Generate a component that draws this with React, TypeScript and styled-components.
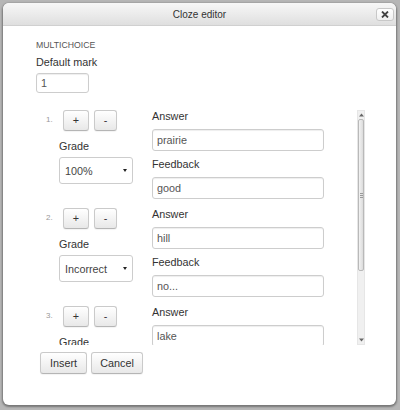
import React from "react";
import styled, { createGlobalStyle } from "styled-components";

const GlobalStyle = createGlobalStyle`
  html, body { margin: 0; padding: 0; }
  body {
    background: #b6b6b6;
    font-family: "Liberation Sans", Arial, sans-serif;
    font-size: 10.8px;
    color: #333;
  }
`;

const Backdrop = styled.div`
  width: 400px;
  height: 410px;
  padding: 3px 4px 5px 3px;
  box-sizing: border-box;
`;

const Dialog = styled.div`
  width: 393px;
  height: 402px;
  background: #fff;
  border-radius: 6px;
  box-shadow: 0 1px 2px 1px rgba(0, 0, 0, 0.35);
  overflow: hidden;
  display: flex;
  flex-direction: column;
`;

const Header = styled.div`
  height: 22px;
  flex: none;
  display: grid;
  grid-template-columns: 1fr auto 1fr;
  align-items: center;
  background: linear-gradient(#f7f7f7, #dfdfdf);
  border-bottom: 1px solid #d0d0d0;
`;

const Title = styled.div`
  grid-column: 2;
  font-size: 10px;
  color: #333;
`;

const CloseButton = styled.button`
  grid-column: 3;
  justify-self: end;
  margin-right: 2px;
  width: 18px;
  height: 13px;
  padding: 0;
  border: 1px solid #c8c8c8;
  border-radius: 3px;
  background: linear-gradient(#ffffff, #f0f0f0);
  display: flex;
  align-items: center;
  justify-content: center;
`;

const Body = styled.div`
  flex: 1;
  padding: 13px 0 0 33px;
  display: flex;
  flex-direction: column;
  align-items: flex-start;
`;

const SectionTitle = styled.div`
  font-size: 8.7px;
  line-height: 12px;
  color: #555;
  text-transform: uppercase;
`;

const Label = styled.div<{ $mt?: number }>`
  font-size: 10.8px;
  line-height: 13px;
  color: #333;
  margin-top: ${(p) => p.$mt ?? 0}px;
`;

const TextInput = styled.div<{ $w?: number; $h?: number; $mt?: number }>`
  box-sizing: border-box;
  width: ${(p) => (p.$w ? `${p.$w}px` : "100%")};
  height: ${(p) => p.$h ?? 22}px;
  margin-top: ${(p) => p.$mt ?? 0}px;
  border: 1px solid #cdcdcd;
  border-radius: 3px;
  box-shadow: inset 0 1px 1px rgba(0, 0, 0, 0.07);
  padding: 0 4px;
  display: flex;
  align-items: center;
  color: #555;
  font-size: 10.8px;
  background: #fff;
`;

const ScrollArea = styled.div`
  margin-top: 17px;
  height: 235px;
  width: 329px;
  display: flex;
  overflow: hidden;
`;

const ScrollContent = styled.div`
  flex: 1;
  padding-left: 10px;
  overflow: hidden;
  display: flex;
  flex-direction: column;
  gap: 9px;
`;

const Item = styled.div`
  display: grid;
  grid-template-columns: 13px 74px 191px;
  flex: none;
`;

const Num = styled.div`
  font-size: 8px;
  color: #999;
  padding-top: 5px;
`;

const LeftCol = styled.div`
  display: flex;
  flex-direction: column;
  align-items: flex-start;
`;

const ButtonRow = styled.div`
  display: flex;
  gap: 5px;
  margin-left: 4px;
`;

const Btn = styled.button<{ $w: number; $h?: number }>`
  box-sizing: border-box;
  width: ${(p) => p.$w}px;
  height: ${(p) => p.$h ?? 21}px;
  padding: 0;
  font-family: "Liberation Sans", Arial, sans-serif;
  font-size: 10.8px;
  line-height: 1;
  color: #333;
  background: linear-gradient(#ffffff, #e8e8e8);
  border: 1px solid #cacaca;
  border-bottom-color: #b5b5b5;
  border-radius: 3px;
  box-shadow: 0 1px 1px rgba(0, 0, 0, 0.05);
`;

const Select = styled.div`
  box-sizing: border-box;
  width: 74px;
  height: 27px;
  margin-top: 4px;
  border: 1px solid #cdcdcd;
  border-radius: 3px;
  padding: 0 4px 0 5px;
  display: flex;
  align-items: center;
  justify-content: space-between;
  color: #444;
  font-size: 10.8px;
`;

const Caret = styled.span`
  width: 0;
  height: 0;
  border-left: 2px solid transparent;
  border-right: 2px solid transparent;
  border-top: 3px solid #222;
  margin-right: 1px;
`;

const RightCol = styled.div`
  display: flex;
  flex-direction: column;
  margin-left: 19px;
`;

const Scrollbar = styled.div`
  width: 8px;
  flex: none;
  display: flex;
  flex-direction: column;
  background: #f0f0f0;
  border: 1px solid #e6e6e6;
  box-sizing: border-box;
`;

const ArrowBox = styled.div`
  height: 8px;
  flex: none;
  display: flex;
  align-items: center;
  justify-content: center;
`;

const Track = styled.div`
  flex: 1;
  display: flex;
  flex-direction: column;
`;

const Thumb = styled.div`
  height: 150px;
  border: 1px solid #b9b9b9;
  border-radius: 2px;
  background: linear-gradient(90deg, #f2f2f2, #dcdcdc);
  display: flex;
  align-items: center;
  justify-content: center;
`;

const Grip = styled.div`
  width: 3px;
  height: 5px;
  background: repeating-linear-gradient(#999 0 1px, transparent 1px 2px);
`;

const Footer = styled.div`
  display: flex;
  gap: 4px;
  margin: 7px 0 0 4px;
`;

const Arrow = ({ up }: { up?: boolean }) => (
  <svg width="5" height="4" viewBox="0 0 5 4">
    <path d={up ? "M0 3.5 L2.5 0.5 L5 3.5 Z" : "M0 0.5 L2.5 3.5 L5 0.5 Z"} fill="#666" />
  </svg>
);

type Entry = { n: number; grade: string; answer: string; feedback?: string };

const entries: Entry[] = [
  { n: 1, grade: "100%", answer: "prairie", feedback: "good" },
  { n: 2, grade: "Incorrect", answer: "hill", feedback: "no..." },
  { n: 3, grade: "Incorrect", answer: "lake", feedback: "" },
];

export default function App() {
  return (
    <>
      <GlobalStyle />
      <Backdrop>
        <Dialog>
          <Header>
            <Title>Cloze editor</Title>
            <CloseButton aria-label="close">
              <svg width="8" height="7" viewBox="0 0 8 7">
                <path d="M1 0.5 L7 6.5 M7 0.5 L1 6.5" stroke="#444" strokeWidth="1.8" />
              </svg>
            </CloseButton>
          </Header>
          <Body>
            <SectionTitle>Multichoice</SectionTitle>
            <Label $mt={5}>Default mark</Label>
            <TextInput $w={53} $h={20} $mt={4}>1</TextInput>
            <ScrollArea>
              <ScrollContent>
                {entries.map((e) => (
                  <Item key={e.n}>
                    <Num>{e.n}.</Num>
                    <LeftCol>
                      <ButtonRow>
                        <Btn $w={26}>+</Btn>
                        <Btn $w={23}>-</Btn>
                      </ButtonRow>
                      <Label $mt={9}>Grade</Label>
                      <Select>
                        <span>{e.grade}</span>
                        <Caret />
                      </Select>
                    </LeftCol>
                    <RightCol>
                      <Label>Answer</Label>
                      <TextInput $mt={6}>{e.answer}</TextInput>
                      <Label $mt={7}>Feedback</Label>
                      <TextInput $mt={6}>{e.feedback}</TextInput>
                    </RightCol>
                  </Item>
                ))}
              </ScrollContent>
              <Scrollbar>
                <ArrowBox>
                  <Arrow up />
                </ArrowBox>
                <Track>
                  <Thumb>
                    <Grip />
                  </Thumb>
                </Track>
                <ArrowBox>
                  <Arrow />
                </ArrowBox>
              </Scrollbar>
            </ScrollArea>
            <Footer>
              <Btn $w={47} $h={22}>Insert</Btn>
              <Btn $w={52} $h={22}>Cancel</Btn>
            </Footer>
          </Body>
        </Dialog>
      </Backdrop>
    </>
  );
}
